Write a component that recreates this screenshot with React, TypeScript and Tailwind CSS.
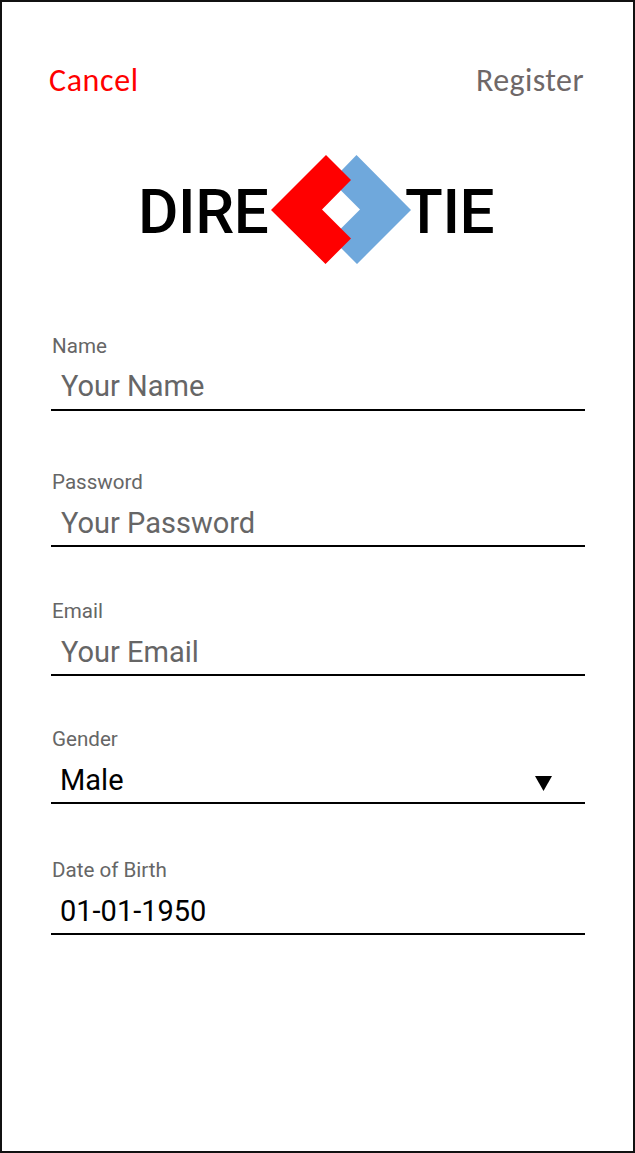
type FieldProps = { label: string; value: string; muted?: boolean; select?: boolean; className: string; rowClassName?: string };

function Field({ label, value, muted, select, className, rowClassName = 'pt-[10px]' }: FieldProps) {
  return (
    <div className={`flex h-[79px] w-[534px] flex-col border-b-2 border-black ${className}`}>
      <span className="pl-px text-[20.6px] leading-[28px] text-[#666666]">{label}</span>
      <div className={`flex items-center justify-between pr-[33px] ${rowClassName}`}>
        <span className={`text-[29px] leading-[34px] ${muted ? 'pl-[10px] text-[#666666]' : 'pl-[9px] text-black'}`}>{value}</span>
        {select && (
          <svg className="mt-1.5 h-[15px] w-[17px]" viewBox="0 0 17 15"><path d="M0 0H17L8.5 15Z" /></svg>
        )}
      </div>
    </div>
  );
}

export default function App() {
  return (
    <main className="flex h-[1153px] w-[635px] flex-col border-2 border-[#111] bg-white px-[49px] font-['Roboto',sans-serif]">
      <header className="-ml-[2px] mt-[61px] flex h-[36px] justify-between font-['Carlito','Open_Sans',sans-serif] text-[32px] leading-[36px]">
        <button className="tracking-[0.6px] text-[#ff0000]">Cancel</button>
        <button className="tracking-[0.4px] text-[#6f6868]">Register</button>
      </header>
      <div className="mt-[53px] ml-[87px] flex h-[116px] items-center text-[62px] leading-[116px] font-medium tracking-[-0.4px]">
        <span className="w-[133px] pt-[3px]">DIRE</span>
        <svg className="h-[110px] w-[140px] shrink-0" viewBox="271 155 140 110">
          <path d="M356.5 155L411 210L357 264L341 248V228.5L360 209.5L341 190.5V171Z" fill="#6fa8dc" />
          <path d="M326 155L351 180L322 209.5L351 238.5L325.5 264L271 210Z" fill="#ff0000" />
        </svg>
        <span className="-ml-1.5 pt-[3px]">TIE</span>
      </div>
      <Field label="Name" value="Your Name" muted className="mt-[64px]" rowClassName="pt-[9px]" />
      <Field label="Password" value="Your Password" muted className="mt-[57px]" />
      <Field label="Email" value="Your Email" muted className="mt-[50px]" />
      <Field label="Gender" value="Male" select className="mt-[49px]" />
      <Field label="Date of Birth" value="01-01-1950" className="mt-[52px]" />
    </main>
  );
}
